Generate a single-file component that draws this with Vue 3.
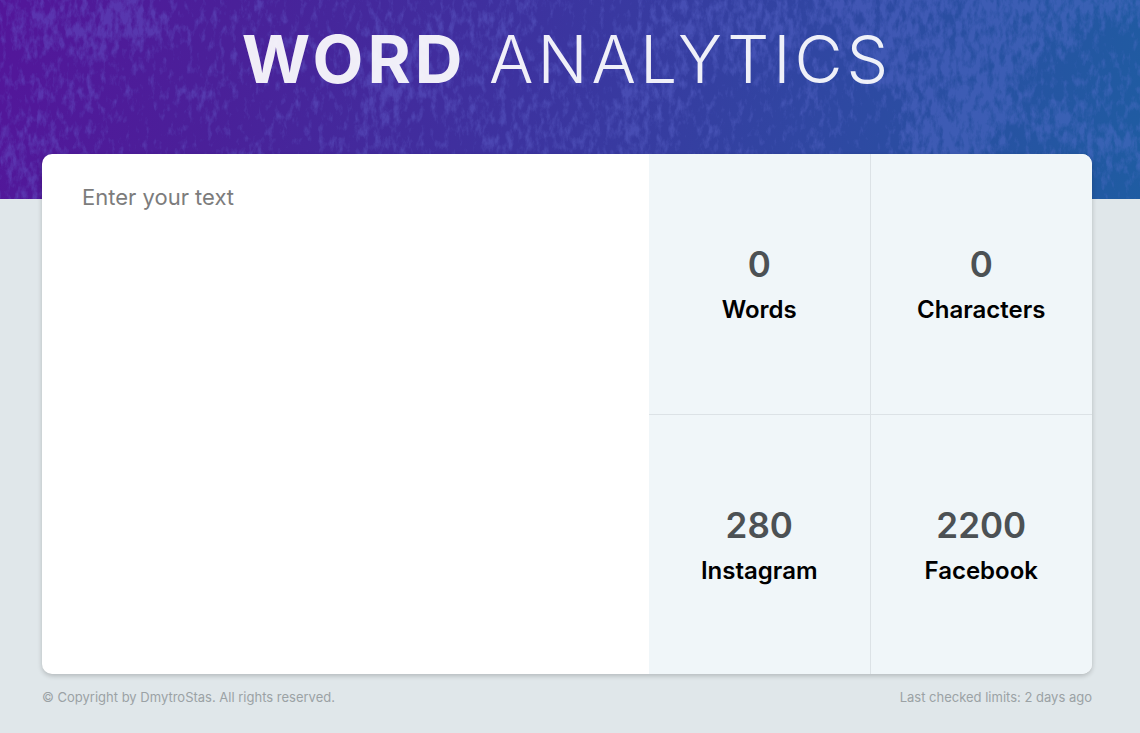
<script setup>
import { computed, ref } from 'vue'

const text = ref('')

const stats = computed(() => {
  const length = text.value.length
  const words = text.value.split(/\s+/).filter(Boolean).length
  return [
    { label: 'Words', value: words },
    { label: 'Characters', value: length },
    { label: 'Instagram', value: 280 - length },
    { label: 'Facebook', value: 2200 - length },
  ]
})
</script>

<template>
  <div class="page">
    <header class="header">
      <svg class="texture" aria-hidden="true" viewBox="0 0 1140 199" preserveAspectRatio="none">
        <defs>
          <filter id="speckle" filterUnits="userSpaceOnUse" x="0" y="0" width="1140" height="240" color-interpolation-filters="sRGB">
            <feTurbulence type="fractalNoise" baseFrequency="0.16 0.08" numOctaves="4" seed="7" result="grain" />
            <feTurbulence type="fractalNoise" baseFrequency="0.018" numOctaves="3" seed="5" result="cloud" />
            <feGaussianBlur in="SourceAlpha" stdDeviation="11" result="soft" />
            <feComposite in="soft" in2="cloud" operator="arithmetic" k1="0" k2="0.4" k3="0.45" k4="0" result="density" />
            <feComposite in="grain" in2="density" operator="arithmetic" k1="0" k2="0.7" k3="0.6" k4="0" />
            <feColorMatrix type="matrix" values="0 0 0 0 0.43  0 0 0 0 0.47  0 0 0 0 0.87  0 0 0 4 -2.05" />
            <feColorMatrix type="matrix" values="1 0 0 0 0  0 1 0 0 0  0 0 1 0 0  0 0 0 0.3 0" />
            <feGaussianBlur stdDeviation="0.6" />
          </filter>
        </defs>
        <g filter="url(#speckle)">
          <rect width="1140" height="240" fill-opacity="0.1" />
          <ellipse cx="60" cy="18" rx="62" ry="32" fill-opacity="0.6" />
          <ellipse cx="125" cy="22" rx="34" ry="38" fill-opacity="0.6" />
          <ellipse cx="30" cy="160" rx="32" ry="52" fill-opacity="0.65" />
          <ellipse cx="385" cy="95" rx="25" ry="75" fill-opacity="0.55" />
          <ellipse cx="470" cy="60" rx="50" ry="60" fill-opacity="0.3" />
          <ellipse cx="560" cy="130" rx="100" ry="30" fill-opacity="0.2" />
          <ellipse cx="650" cy="80" rx="35" ry="80" fill-opacity="0.3" />
          <ellipse cx="760" cy="30" rx="90" ry="40" fill-opacity="0.4" />
          <path d="M790-20 H1170 V15 L1060 40 L1010 85 L1170 150 V180 L1020 130 L950 195 H890 L915 110 L850 55 Z" fill-opacity="0.85" />
        </g>
      </svg>
      <h1 class="title"><strong>WORD</strong> ANALYTICS</h1>
    </header>

    <main class="content">
      <section class="card">
        <textarea v-model="text" class="editor" aria-label="Text to analyse" placeholder="Enter your text"></textarea>
        <div class="stats">
          <div v-for="stat in stats" :key="stat.label" class="stat">
            <span class="value">{{ stat.value }}</span>
            <h2 class="label">{{ stat.label }}</h2>
          </div>
        </div>
      </section>
      <footer class="footer">
        <small>© Copyright by DmytroStas. All rights reserved.</small>
        <small>Last checked limits: 2 days ago</small>
      </footer>
    </main>
  </div>
</template>

<style>
body {
  background: #e0e7ea;
}
</style>

<style scoped>
.page {
  min-height: 100vh;
  font-family: Inter, "Liberation Sans", sans-serif;
  color: #000;
}

.header {
  display: grid;
  background: linear-gradient(100deg, #53169a 0%, #4a2099 20%, #3d329f 45%, #3046a2 70%, #1f5ca2 100%);
}

.texture,
.title {
  grid-area: 1 / 1;
}

.texture {
  display: block;
  width: 100%;
  height: 100%;
  min-height: 0;
}

.title {
  margin: 0;
  padding: 19px 48px 100px 42px;
  font-size: 66px;
  line-height: 80px;
  font-weight: 300;
  letter-spacing: 4px;
  text-align: center;
  color: rgba(255, 255, 255, 0.92);
  z-index: 1;
}

.title strong {
  font-weight: 700;
}

.content {
  position: relative;
  z-index: 2;
  margin-top: -45px;
  padding: 0 48px 0 42px;
}

.card {
  display: grid;
  grid-template-columns: 607fr 443fr;
  min-height: 520px;
  border-radius: 10px;
  overflow: hidden;
  background: #fff;
  box-shadow: 0 2px 5px rgba(0, 0, 0, 0.2);
}

.editor {
  padding: 30px 40px;
  border: 0;
  outline: 0;
  resize: none;
  background: transparent;
  font: 400 22px/27px Inter, "Liberation Sans", sans-serif;
}

.editor::placeholder {
  color: #7c7c7c;
}

.stats {
  display: grid;
  grid-template-columns: 1fr 1fr;
  grid-template-rows: 1fr 1fr;
  background: #f0f6f9;
}

.stat {
  display: flex;
  flex-direction: column;
  align-items: center;
  justify-content: center;
  gap: 10px;
}

.stat:nth-child(odd) {
  border-right: 1px solid #dce2e6;
}

.stat:nth-child(n + 3) {
  border-top: 1px solid #dce2e6;
}

.value {
  font-size: 35px;
  line-height: 42px;
  font-weight: 600;
  color: #4c5154;
}

.label {
  margin: 0;
  font-size: 24px;
  line-height: 30px;
  font-weight: 600;
}

.footer {
  display: flex;
  justify-content: space-between;
  padding-top: 15px;
  color: #9ba2a5;
}

.footer small {
  font-size: 13px;
  line-height: 16px;
  font-weight: 400;
}
</style>
